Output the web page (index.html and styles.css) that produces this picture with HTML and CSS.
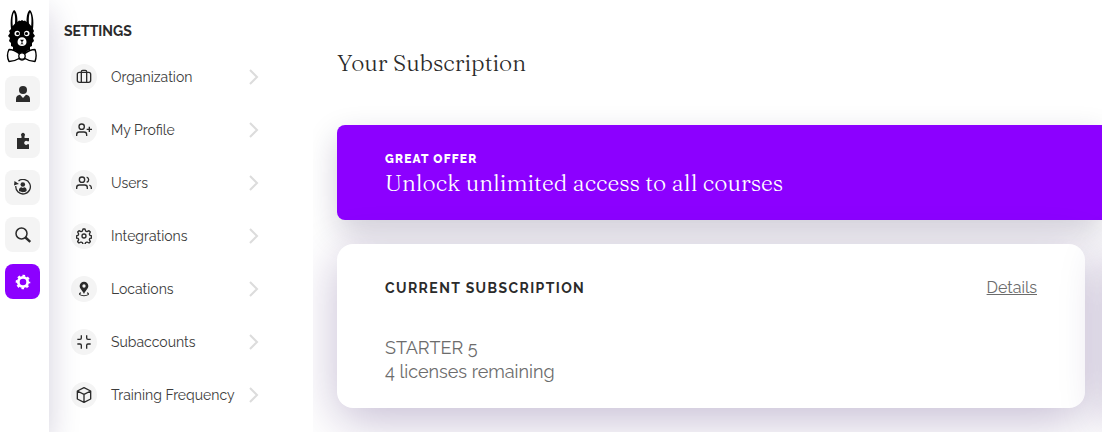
FILE: index.html
```html
<!DOCTYPE html>
<html lang="en">
<head>
  <meta charset="UTF-8" />
  <meta name="viewport" content="width=device-width, initial-scale=1.0"/>
  <title>Settings - Subscription</title>
  <link rel="stylesheet" href="styles.css">
</head>
<body>
  <nav class="rail" aria-label="Main">
    <a class="logo" href="#" aria-label="Home">
      <svg width="32" height="56" viewBox="0 0 32 56">
        <path d="M5 20C4 12 5 4 8 1c2.500 1 3.500 6 3.500 12l1.500-1.500 1.500.5L16 11l1.500 1 1.500-.5 1.500 1.500c0-6 1-11 3.500-12 3 3 4 11 3 19l1 2-1 2 2 3-2 2 1 3-2 2 0 3-2 1 0 3-3 1-1 2-3 1h-3l-3-1-1-2-3-1 0-3-2-1 0-3-2-2 1-3-2-2 2-3-1-2z" fill="#000"/>
        <path d="M6.800 17C6.200 11 6.500 6 8 3.500c1.300 2.500 1.300 8 1 11zM25.200 17c.6-6 .3-11-1.200-13.500-1.300 2.500-1.300 8-1 11z" fill="#fff"/>
        <circle cx="11.200" cy="24.500" r="2.700" fill="#fff"/>
        <circle cx="20.800" cy="24.500" r="2.700" fill="#fff"/>
        <circle cx="11.600" cy="24.500" r="1.600" fill="#000"/>
        <circle cx="20.400" cy="24.500" r="1.600" fill="#000"/>
        <path d="M11.500 33c0-2.800 2-4.700 4.500-4.700s4.500 1.900 4.500 4.700-2 4-4.500 4-4.500-1.200-4.500-4z" fill="#fff"/>
        <path d="M14 30.800h4l-1.600 2v1.400l1.400 1h-3.600l1.400-1v-1.400z" fill="#000"/>
        <path d="M3 40.500c4 0 7 1.500 10 4 2-1.500 4-1.500 6 0 3-2.500 6-4 10-4 1.500 4 1.500 8 0 12-4 0-7-1-10-3-2 2-4 2-6 0-3 2-6 3-10 3-2-4-2-8 0-12z" fill="#fff" stroke="#000" stroke-width="1.400" stroke-linejoin="round"/>
        <circle cx="16" cy="47" r="3.200" fill="#fff" stroke="#000" stroke-width="1.300"/>
      </svg>
    </a>
    <a class="rail-btn" href="#" aria-label="People">
      <svg width="16" height="18" viewBox="0 0 16 18" fill="currentColor">
        <circle cx="8" cy="5" r="4"/>
        <path d="M1 17v-3c0-2.500 1.500-4 4-4.300L8 13l3-3.300c2.500.3 4 1.800 4 4.300v3z"/>
      </svg>
    </a>
    <a class="rail-btn" href="#" aria-label="Modules">
      <svg width="16" height="18" viewBox="0 0 16 18" fill="currentColor">
        <path d="M2 6h4.500V4.300a2 2 0 1 1 3 0V6H14v3.300h-1.500a2 2 0 1 0 0 3H14V17H2z"/>
      </svg>
    </a>
    <a class="rail-btn" href="#" aria-label="Sync users">
      <svg width="18" height="18" viewBox="0 0 18 18" fill="currentColor">
        <path d="M4.500 2A7.300 7.300 0 1 1 1.800 7" fill="none" stroke="currentColor" stroke-width="1.300"/>
        <path d="M0 6.500l.5-4.500L5 5l-2.200.4z"/>
        <circle cx="8.800" cy="5.500" r="2.300"/>
        <path d="M5 12c-.3-2.500 1-3.700 2.500-3.700l1.300.8 1.300-.8c1.500 0 2.800 1.200 2.500 3.700-2 1.600-5.600 1.600-7.600 0z"/>
      </svg>
    </a>
    <a class="rail-btn" href="#" aria-label="Search">
      <svg width="18" height="18" viewBox="0 0 18 18" fill="none" stroke="currentColor">
        <circle cx="7.500" cy="7.500" r="5.500" stroke-width="1.500"/>
        <path d="M11.500 11.500l4.800 4.300" stroke-width="2.400"/>
      </svg>
    </a>
    <a class="rail-btn active" href="#" aria-label="Settings">
      <svg width="18" height="18" viewBox="0 0 18 18" fill="none" stroke="currentColor">
        <circle cx="9" cy="9" r="4.700" stroke-width="2.800"/>
        <circle cx="9" cy="9" r="6.300" stroke-width="2" stroke-dasharray="2.600 2.348" stroke-dashoffset="1.300"/>
      </svg>
    </a>
  </nav>

  <aside class="settings">
    <h2>SETTINGS</h2>
    <ul class="menu">
      <li><a href="#">
        <span class="icon"><svg class="line" viewBox="0 0 24 24"><rect x="2" y="5" width="20" height="15" rx="3"/><path d="M8 20V4a2 2 0 0 1 2-2h4a2 2 0 0 1 2 2v16"/></svg></span>
        <span class="label">Organization</span>
        <svg class="chevron" viewBox="0 0 10 16"><path d="M1 1l7 7-7 7"/></svg>
      </a></li>
      <li><a href="#">
        <span class="icon"><svg class="line" viewBox="0 0 24 24"><circle cx="8.500" cy="7" r="4"/><path d="M16 21v-2a4 4 0 0 0-4-4H5a4 4 0 0 0-4 4v2M20 7v8M24 11h-8"/></svg></span>
        <span class="label">My Profile</span>
        <svg class="chevron" viewBox="0 0 10 16"><path d="M1 1l7 7-7 7"/></svg>
      </a></li>
      <li><a href="#">
        <span class="icon"><svg class="line" viewBox="0 0 24 24"><circle cx="9" cy="7" r="4"/><path d="M17 21v-2a4 4 0 0 0-4-4H5a4 4 0 0 0-4 4v2M23 21v-2a4 4 0 0 0-3-3.870M16 3.130a4 4 0 0 1 0 7.750"/></svg></span>
        <span class="label">Users</span>
        <svg class="chevron" viewBox="0 0 10 16"><path d="M1 1l7 7-7 7"/></svg>
      </a></li>
      <li><a href="#">
        <span class="icon"><svg class="line" viewBox="0 0 24 24"><circle cx="12" cy="12" r="3"/><path d="M10.500 1.500h3l1 3.200 2 .8 3-1.500 2 2-1.500 3 .8 2 2.700 1v3l-2.700.5-.8 2 1.500 3-2 2-3-1.500-2 .8-1 2.700h-3l-1-2.700-2-.8-3 1.500-2-2 1.500-3-.8-2-2.700-.5v-3l2.700-1 .8-2-1.500-3 2-2 3 1.500 2-.8z" stroke-linejoin="round"/></svg></span>
        <span class="label">Integrations</span>
        <svg class="chevron" viewBox="0 0 10 16"><path d="M1 1l7 7-7 7"/></svg>
      </a></li>
      <li><a href="#">
        <span class="icon"><svg class="solid" viewBox="0 0 24 24"><path fill-rule="evenodd" d="M12 1a6.500 6.500 0 0 1 6.500 6.500c0 4-4.500 7-6.500 12-2-5-6.500-8-6.500-12A6.500 6.500 0 0 1 12 1zm0 4a2.500 2.500 0 1 0 0 5 2.500 2.500 0 0 0 0-5z"/><path d="M7.500 17.500c-5 2-1 4.500 4.500 4.500s9.500-2.500 4.500-4.500" fill="none" stroke="currentColor" stroke-width="1.600"/></svg></span>
        <span class="label">Locations</span>
        <svg class="chevron" viewBox="0 0 10 16"><path d="M1 1l7 7-7 7"/></svg>
      </a></li>
      <li><a href="#">
        <span class="icon"><svg class="line" viewBox="0 0 24 24"><path d="M8 2v4a2 2 0 0 1-2 2H2M22 8h-4a2 2 0 0 1-2-2V2M2 15h4a2 2 0 0 1 2 2v5M16 22v-5a2 2 0 0 1 2-2h4"/></svg></span>
        <span class="label">Subaccounts</span>
        <svg class="chevron" viewBox="0 0 10 16"><path d="M1 1l7 7-7 7"/></svg>
      </a></li>
      <li><a href="#">
        <span class="icon"><svg class="line" viewBox="0 0 24 24"><path d="M12 1l10 5v12l-10 5-10-5V6zM2 6l10 5 10-5M12 11v12" stroke-linejoin="round"/></svg></span>
        <span class="label">Training Frequency</span>
        <svg class="chevron" viewBox="0 0 10 16"><path d="M1 1l7 7-7 7"/></svg>
      </a></li>
    </ul>
  </aside>

  <main class="content">
    <h1>Your Subscription</h1>
    <section class="banner">
      <p class="eyebrow">GREAT OFFER</p>
      <p class="headline">Unlock unlimited access to all courses</p>
    </section>
    <div class="cards">
      <section class="card">
        <header>
          <h3>CURRENT SUBSCRIPTION</h3>
          <a href="#">Details</a>
        </header>
        <p>STARTER 5</p>
        <p>4 licenses remaining</p>
      </section>
      <section class="card"></section>
    </div>
  </main>
</body>
</html>
```

FILE: styles.css
```css
* {
  box-sizing: border-box;
}

body {
  margin: 0;
  min-height: 100vh;
  display: flex;
  overflow: hidden;
  background: #fff;
  color: #2b2b2b;
  font-family: Raleway, Lato, sans-serif;
}

h1, h2, h3, p, ul {
  margin: 0;
  padding: 0;
}

a {
  color: inherit;
  text-decoration: none;
}

/* icon rail */
.rail {
  flex: none;
  width: 49px;
  padding: 9px 9px 0 5px;
  display: flex;
  flex-direction: column;
  gap: 12px;
  background: #fff;
  box-shadow: 0 12px 32px rgba(32, 16, 80, 0.2);
  z-index: 1;
}

.logo {
  height: 55px;
  padding-left: 1px;
}

.logo svg {
  display: block;
}

.rail-btn {
  height: 35px;
  display: flex;
  align-items: center;
  justify-content: center;
  border-radius: 8px;
  background: #f4f4f4;
}

.rail-btn.active {
  background: #8c00ff;
  color: #fff;
}

/* settings menu */
.settings {
  flex: none;
  width: 264px;
  padding: 21px 54px 0 15px;
}

.settings h2 {
  font-size: 14px;
  line-height: 20px;
  font-weight: 700;
}

.menu {
  list-style: none;
  padding: 9px 0 0 7px;
}

.menu a {
  height: 53px;
  display: flex;
  align-items: center;
  gap: 14px;
}

.icon {
  flex: none;
  width: 26px;
  height: 26px;
  display: flex;
  align-items: center;
  justify-content: center;
  border-radius: 50%;
  background: #f4f4f4;
}

.icon svg {
  width: 16px;
  height: 16px;
}

.line {
  fill: none;
  stroke: currentColor;
  stroke-width: 2;
}

.solid {
  fill: currentColor;
}

.label {
  flex: 1;
  color: #3c3c3c;
  font-size: 14px;
  font-weight: 400;
  white-space: nowrap;
}

.chevron {
  flex: none;
  width: 10px;
  height: 16px;
  fill: none;
  stroke: #dcdcdc;
  stroke-width: 2;
}

/* page content */
.content {
  flex: 1;
  min-width: 0;
  padding: 47px 17px 24px 24px;
  overflow: hidden;
}

h1, .headline {
  font-family: Recoleta, Fraunces, "Liberation Serif", serif;
  font-size: 23px;
  line-height: 32px;
  font-weight: 300;
}

.banner {
  margin: 46px -17px 24px 0;
  padding: 26px 48px 21px;
  border-radius: 8px 0 0 8px;
  background: #8c00ff;
  color: #fff;
  box-shadow: 0 12px 32px rgba(32, 16, 64, 0.2);
}

.eyebrow {
  font-size: 12px;
  line-height: 16px;
  font-weight: 800;
  letter-spacing: 0.1em;
}

.cards {
  display: flex;
  gap: 24px;
}

.card {
  flex: 0 0 100%;
  padding: 32px 48px 24px;
  border-radius: 16px;
  background: #fff;
  box-shadow: 0 12px 48px rgba(48, 16, 96, 0.28);
}

.card header {
  display: flex;
  align-items: center;
  justify-content: space-between;
  margin-bottom: 36px;
}

.card h3 {
  font-size: 14px;
  line-height: 24px;
  font-weight: 700;
  letter-spacing: 0.1em;
}

.card header a {
  color: #6c6c6c;
  font-size: 16px;
  line-height: 22px;
  font-weight: 400;
  text-decoration: underline;
}

.card p {
  color: #6c6c6c;
  font-size: 18px;
  line-height: 24px;
  font-weight: 400;
}
```
